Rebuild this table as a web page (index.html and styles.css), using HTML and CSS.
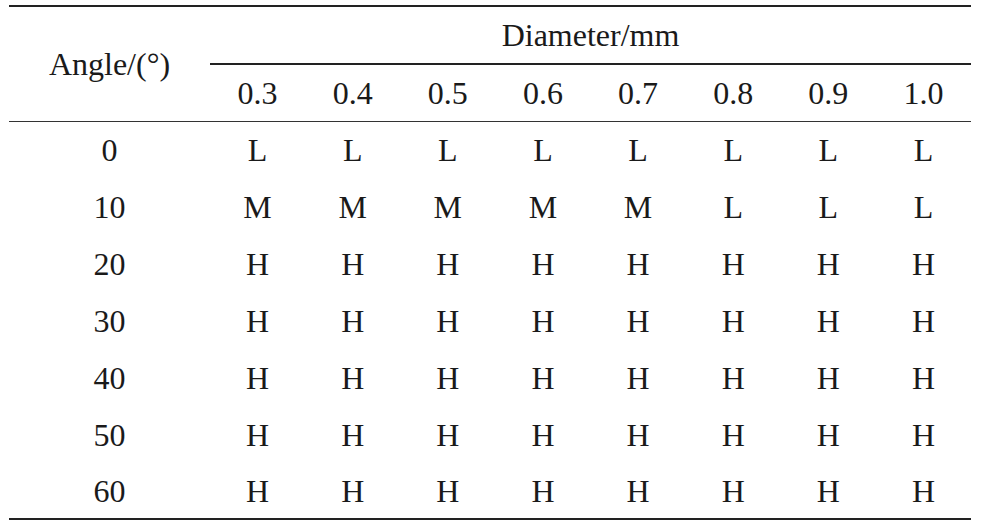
FILE: index.html
```html
<!DOCTYPE html>
<html>
<head>
<meta charset="utf-8">
<link rel="stylesheet" href="styles.css">
</head>
<body>
<div class="page">
<table class="data">
  <thead>
    <tr class="head-top">
      <th class="angle" rowspan="2">Angle/(°)</th>
      <th class="diam" colspan="8">Diameter/mm</th>
    </tr>
    <tr class="head-sub">
      <th>0.3</th><th>0.4</th><th>0.5</th><th>0.6</th><th>0.7</th><th>0.8</th><th>0.9</th><th>1.0</th>
    </tr>
  </thead>
  <tbody>
    <tr><td>0</td><td>L</td><td>L</td><td>L</td><td>L</td><td>L</td><td>L</td><td>L</td><td>L</td></tr>
    <tr><td>10</td><td>M</td><td>M</td><td>M</td><td>M</td><td>M</td><td>L</td><td>L</td><td>L</td></tr>
    <tr><td>20</td><td>H</td><td>H</td><td>H</td><td>H</td><td>H</td><td>H</td><td>H</td><td>H</td></tr>
    <tr><td>30</td><td>H</td><td>H</td><td>H</td><td>H</td><td>H</td><td>H</td><td>H</td><td>H</td></tr>
    <tr><td>40</td><td>H</td><td>H</td><td>H</td><td>H</td><td>H</td><td>H</td><td>H</td><td>H</td></tr>
    <tr><td>50</td><td>H</td><td>H</td><td>H</td><td>H</td><td>H</td><td>H</td><td>H</td><td>H</td></tr>
    <tr class="last"><td>60</td><td>H</td><td>H</td><td>H</td><td>H</td><td>H</td><td>H</td><td>H</td><td>H</td></tr>
  </tbody>
</table>
</div>
</body>
</html>
```
FILE: styles.css
```css
html, body {
  margin: 0;
  padding: 0;
  background: #ffffff;
}

.page {
  padding: 5px 0 0 9px;
}

.data {
  width: 962px;
  table-layout: fixed;
  border-collapse: separate;
  border-spacing: 0;
  font-family: "Liberation Serif", "Times New Roman", serif;
  font-size: 32px;
  color: #1a1a1a;
}

.data th,
.data td {
  padding: 0;
  margin: 0;
  text-align: center;
  vertical-align: middle;
  font-weight: normal;
  line-height: 32px;
  box-sizing: border-box;
}

.data .angle {
  width: 201px;
  border-top: 2px solid #222;
  border-bottom: 1px solid #333;
}

.data .diam {
  height: 60px;
  border-top: 2px solid #222;
  border-bottom: 2px solid #222;
}

.head-sub th {
  height: 57px;
  border-bottom: 1px solid #333;
}

.data tbody td {
  height: 56.86px;
}

.data tbody tr.last td {
  border-bottom: 2px solid #222;
}
```
